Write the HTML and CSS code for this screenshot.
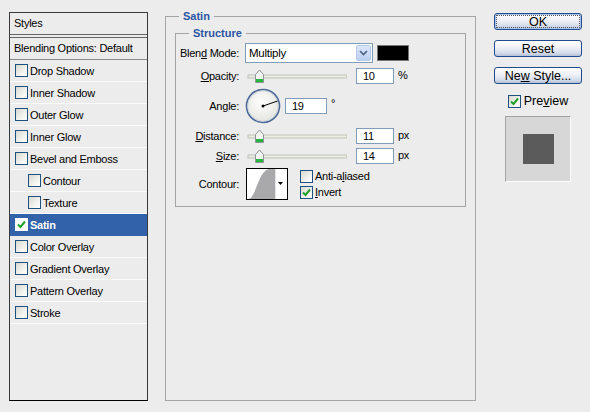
FILE: index.html
```html
<!DOCTYPE html>
<html lang="en">
<head>
    <meta charset="UTF-8">
    <title>Layer Style - Satin</title>
    <link rel="stylesheet" href="styles.css">
</head>
<body>
    <div class="dialog">
        <div class="styles-panel">
            <div class="sp-head">Styles</div>
            <div class="sp-blend">Blending Options: Default</div>
            <div class="sp-item"><span class="cb"></span><span>Drop Shadow</span></div>
            <div class="sp-item"><span class="cb"></span><span>Inner Shadow</span></div>
            <div class="sp-item"><span class="cb"></span><span>Outer Glow</span></div>
            <div class="sp-item"><span class="cb"></span><span>Inner Glow</span></div>
            <div class="sp-item"><span class="cb"></span><span>Bevel and Emboss</span></div>
            <div class="sp-item sub"><span class="cb"></span><span>Contour</span></div>
            <div class="sp-item sub"><span class="cb"></span><span>Texture</span></div>
            <div class="sp-item selected">
                <span class="cb"><svg width="11" height="11" viewBox="0 0 11 11"><path d="M2 5.5 L4.5 8 L9 2.5" fill="none" stroke="#1fa22a" stroke-width="2"/></svg></span><span>Satin</span>
            </div>
            <div class="sp-item"><span class="cb"></span><span>Color Overlay</span></div>
            <div class="sp-item"><span class="cb"></span><span>Gradient Overlay</span></div>
            <div class="sp-item"><span class="cb"></span><span>Pattern Overlay</span></div>
            <div class="sp-item"><span class="cb"></span><span>Stroke</span></div>
        </div>

        <fieldset class="satin">
            <legend>Satin</legend>
            <fieldset class="structure">
                <legend>Structure</legend>
                <div class="fields">
                    <div class="row blend-row">
                        <span class="lbl">Blen<u>d</u> Mode:</span>
                        <div class="select">
                            <span>Multiply</span>
                            <span class="select-btn"><svg width="9" height="6" viewBox="0 0 9 6"><path d="M1 1 L4.5 4.5 L8 1" fill="none" stroke="#4d6185" stroke-width="1.6"/></svg></span>
                        </div>
                        <span class="swatch"></span>
                    </div>

                    <div class="row">
                        <span class="lbl"><u>O</u>pacity:</span>
                        <svg class="slider" width="102" height="16" viewBox="0 0 102 16">
                            <rect x="3" y="7" width="99" height="3" fill="#eceee4" stroke="#b5b8aa" stroke-width="0.8"/>
                            <path d="M10.5 14.5 V6.5 L14.5 2 L18.5 6.5 V14.5 Z" fill="#f3f3ef" stroke="#8f9399"/>
                            <rect x="11" y="11" width="7" height="3" fill="#25b43c"/>
                        </svg>
                        <span class="num">10</span>
                        <span class="unit">%</span>
                    </div>

                    <div class="row angle-row">
                        <span class="lbl">An<u>g</u>le:</span>
                        <svg class="dial" width="36" height="36" viewBox="0 0 36 36">
                            <defs>
                                <radialGradient id="dialFill" cx="45%" cy="40%" r="60%">
                                    <stop offset="0" stop-color="#ffffff"/>
                                    <stop offset="1" stop-color="#e4e4de"/>
                                </radialGradient>
                            </defs>
                            <circle cx="18" cy="18" r="16.5" fill="url(#dialFill)" stroke="#4a6897" stroke-width="1.6"/>
                            <circle cx="18" cy="18" r="15.3" fill="none" stroke="#c6cfdd" stroke-width="0.8"/>
                            <line x1="18" y1="18" x2="32.6" y2="13" stroke="#000" stroke-width="1"/>
                            <circle cx="18" cy="18" r="1.5" fill="#000"/>
                        </svg>
                        <span class="num angle-num">19</span>
                        <span class="unit deg">°</span>
                    </div>

                    <div class="row">
                        <span class="lbl"><u>D</u>istance:</span>
                        <svg class="slider" width="102" height="16" viewBox="0 0 102 16">
                            <rect x="3" y="7" width="99" height="3" fill="#eceee4" stroke="#b5b8aa" stroke-width="0.8"/>
                            <path d="M10.5 14.5 V6.5 L14.5 2 L18.5 6.5 V14.5 Z" fill="#f3f3ef" stroke="#8f9399"/>
                            <rect x="11" y="11" width="7" height="3" fill="#25b43c"/>
                        </svg>
                        <span class="num">11</span>
                        <span class="unit">px</span>
                    </div>

                    <div class="row">
                        <span class="lbl"><u>S</u>ize:</span>
                        <svg class="slider" width="102" height="16" viewBox="0 0 102 16">
                            <rect x="3" y="7" width="99" height="3" fill="#eceee4" stroke="#b5b8aa" stroke-width="0.8"/>
                            <path d="M10.5 14.5 V6.5 L14.5 2 L18.5 6.5 V14.5 Z" fill="#f3f3ef" stroke="#8f9399"/>
                            <rect x="11" y="11" width="7" height="3" fill="#25b43c"/>
                        </svg>
                        <span class="num">14</span>
                        <span class="unit">px</span>
                    </div>

                    <div class="row contour-row">
                        <span class="lbl">Contour:</span>
                        <svg class="contour" width="42" height="32" viewBox="0 0 42 32">
                            <rect x="0.5" y="0.5" width="41" height="31" fill="#fff" stroke="#000"/>
                            <path d="M2 31 C 10 31, 12 3, 23 1 L29 1 L29 31 Z" fill="#a9a9ab"/>
                            <line x1="29.5" y1="1" x2="29.5" y2="31" stroke="#e2e2e2"/>
                            <path d="M32 14 L37 14 L34.5 17 Z" fill="#000"/>
                        </svg>
                        <div class="options">
                            <div class="opt"><span class="cb"></span><span>Anti-a<u>l</u>iased</span></div>
                            <div class="opt">
                                <span class="cb"><svg width="11" height="11" viewBox="0 0 11 11"><path d="M2 5.5 L4.5 8 L9 2.5" fill="none" stroke="#1fa22a" stroke-width="2"/></svg></span><span><u>I</u>nvert</span>
                            </div>
                        </div>
                    </div>
                </div>
            </fieldset>
        </fieldset>

        <div class="actions">
            <button class="btn default">OK</button>
            <button class="btn">Reset</button>
            <button class="btn">Ne<u>w</u> Style...</button>
            <div class="preview-opt">
                <span class="cb"><svg width="11" height="11" viewBox="0 0 11 11"><path d="M2 5.5 L4.5 8 L9 2.5" fill="none" stroke="#1fa22a" stroke-width="2"/></svg></span><span>Pre<u>v</u>iew</span>
            </div>
            <div class="preview">
                <div class="preview-square"></div>
            </div>
        </div>
    </div>
</body>
</html>
```

FILE: styles.css
```css
* {
    margin: 0;
    padding: 0;
    box-sizing: border-box;
}

body {
    width: 590px;
    height: 412px;
    overflow: hidden;
    background: #ececec;
    color: #000;
    font-family: "Liberation Sans", Arial, sans-serif;
    font-size: 11px;
    letter-spacing: -0.25px;
}

u {
    text-decoration: underline;
    text-underline-offset: 1px;
}

.dialog {
    display: flex;
    align-items: flex-start;
    padding: 10px 0 0 9px;
}

/* Styles list on the left */
.styles-panel {
    width: 139px;
    height: 389px;
    margin-top: 2px;
    border: 1px solid #3a3a3a;
    border-bottom-color: #000;
}

.sp-head {
    height: 22px;
    line-height: 21px;
    padding-left: 4px;
    border-bottom: 1px solid #666;
}

.sp-blend {
    height: 23px;
    margin-top: 2px;
    line-height: 21px;
    padding-left: 4px;
    border-top: 1px solid #666;
    border-bottom: 1px solid #8a8a8a;
}

.sp-item {
    height: 22px;
    display: flex;
    align-items: center;
    gap: 2px;
    padding-left: 5px;
    border-bottom: 1px solid #fbfbfb;
}

.sp-item.sub {
    padding-left: 18px;
}

.sp-item.selected {
    background: #3262a9;
    border-bottom-color: #3262a9;
    color: #fff;
    font-weight: bold;
}

.sp-item.selected .cb {
    background: #fff;
    border-color: #fff;
}

.cb {
    width: 13px;
    height: 13px;
    flex: none;
    display: flex;
    align-items: center;
    justify-content: center;
    border: 1px solid #1c5180;
    background: linear-gradient(135deg, #d9d9d2, #f6f6f3 70%, #fff);
}

/* Satin group */
.satin {
    width: 311px;
    height: 391px;
    margin-left: 17px;
    padding: 0 9px;
    border: 1px solid #a4a4a4;
}

.satin legend,
.structure legend {
    padding: 0 4px;
    line-height: 13px;
    font-weight: bold;
    color: #2b55a3;
    letter-spacing: 0;
}

.satin > legend {
    margin-left: 4px;
}

.structure {
    margin-top: 4px;
    padding: 3px 0 6px 0;
    border: 1px solid #a4a4a4;
}

.structure > legend {
    margin-left: 13px;
}

.fields {
    display: flex;
    flex-direction: column;
    gap: 4px;
}

.row {
    display: flex;
    align-items: center;
    height: 16px;
}

.blend-row {
    height: 20px;
    margin-bottom: 1px;
}

.angle-row {
    height: 36px;
}

.contour-row {
    height: 32px;
}

.lbl {
    width: 63px;
    margin-right: 6px;
    text-align: right;
}

.select {
    width: 128px;
    height: 20px;
    display: flex;
    align-items: center;
    justify-content: space-between;
    padding: 1px 1px 1px 3px;
    border: 1px solid #7f9db9;
    background: #fff;
    font-size: 11.5px;
}

.select-btn {
    width: 15px;
    height: 16px;
    display: flex;
    align-items: center;
    justify-content: center;
    border: 1px solid #b6c8ea;
    border-radius: 2px;
    background: linear-gradient(#dbe6fb, #bccff3);
}

.swatch {
    width: 32px;
    height: 16px;
    margin-left: 4px;
    border: 1px solid #777;
    background: #000;
}

.slider {
    flex: none;
}

.num {
    width: 38px;
    height: 16px;
    margin-left: 9px;
    padding-left: 6px;
    line-height: 15px;
    border: 1px solid #7f9db9;
    background: #fff;
}

.angle-num {
    width: 42px;
    margin-left: 4px;
}

.unit {
    margin-left: 4px;
    margin-bottom: 3px;
}

.unit.deg {
    margin-bottom: 6px;
}

.contour {
    flex: none;
    margin-left: 1px;
}

.options {
    display: flex;
    flex-direction: column;
    gap: 3px;
    margin-left: 12px;
}

.opt {
    display: flex;
    align-items: center;
    gap: 2px;
    line-height: 13px;
}

/* Buttons and preview on the right */
.actions {
    width: 88px;
    margin-left: 18px;
    margin-top: 3px;
    display: flex;
    flex-direction: column;
    align-items: center;
}

.btn {
    width: 88px;
    height: 17px;
    margin-bottom: 10px;
    border: 1px solid #1e4c8c;
    border-radius: 3px;
    background: linear-gradient(#ffffff, #eef0f5 45%, #d5dcea 80%, #b3bfd6);
    font-family: "Liberation Sans", Arial, sans-serif;
    font-size: 12.5px;
    letter-spacing: 0;
    line-height: 14px;
    color: #000;
}

.btn.default {
    outline: 1px dotted #555;
    outline-offset: -3px;
    box-shadow: inset 0 0 0 1px #a9c2ee;
}

.preview-opt {
    display: flex;
    align-items: center;
    gap: 3px;
    font-size: 12.5px;
    letter-spacing: 0;
}

.preview {
    width: 66px;
    height: 66px;
    margin-top: 8px;
    display: flex;
    align-items: center;
    justify-content: center;
    border: 1px solid #fff;
    border-top-color: #a2a2a2;
    border-left-color: #a2a2a2;
    background: #d7d7d7;
}

.preview-square {
    width: 31px;
    height: 30px;
    background: #5b5b5b;
}
```
